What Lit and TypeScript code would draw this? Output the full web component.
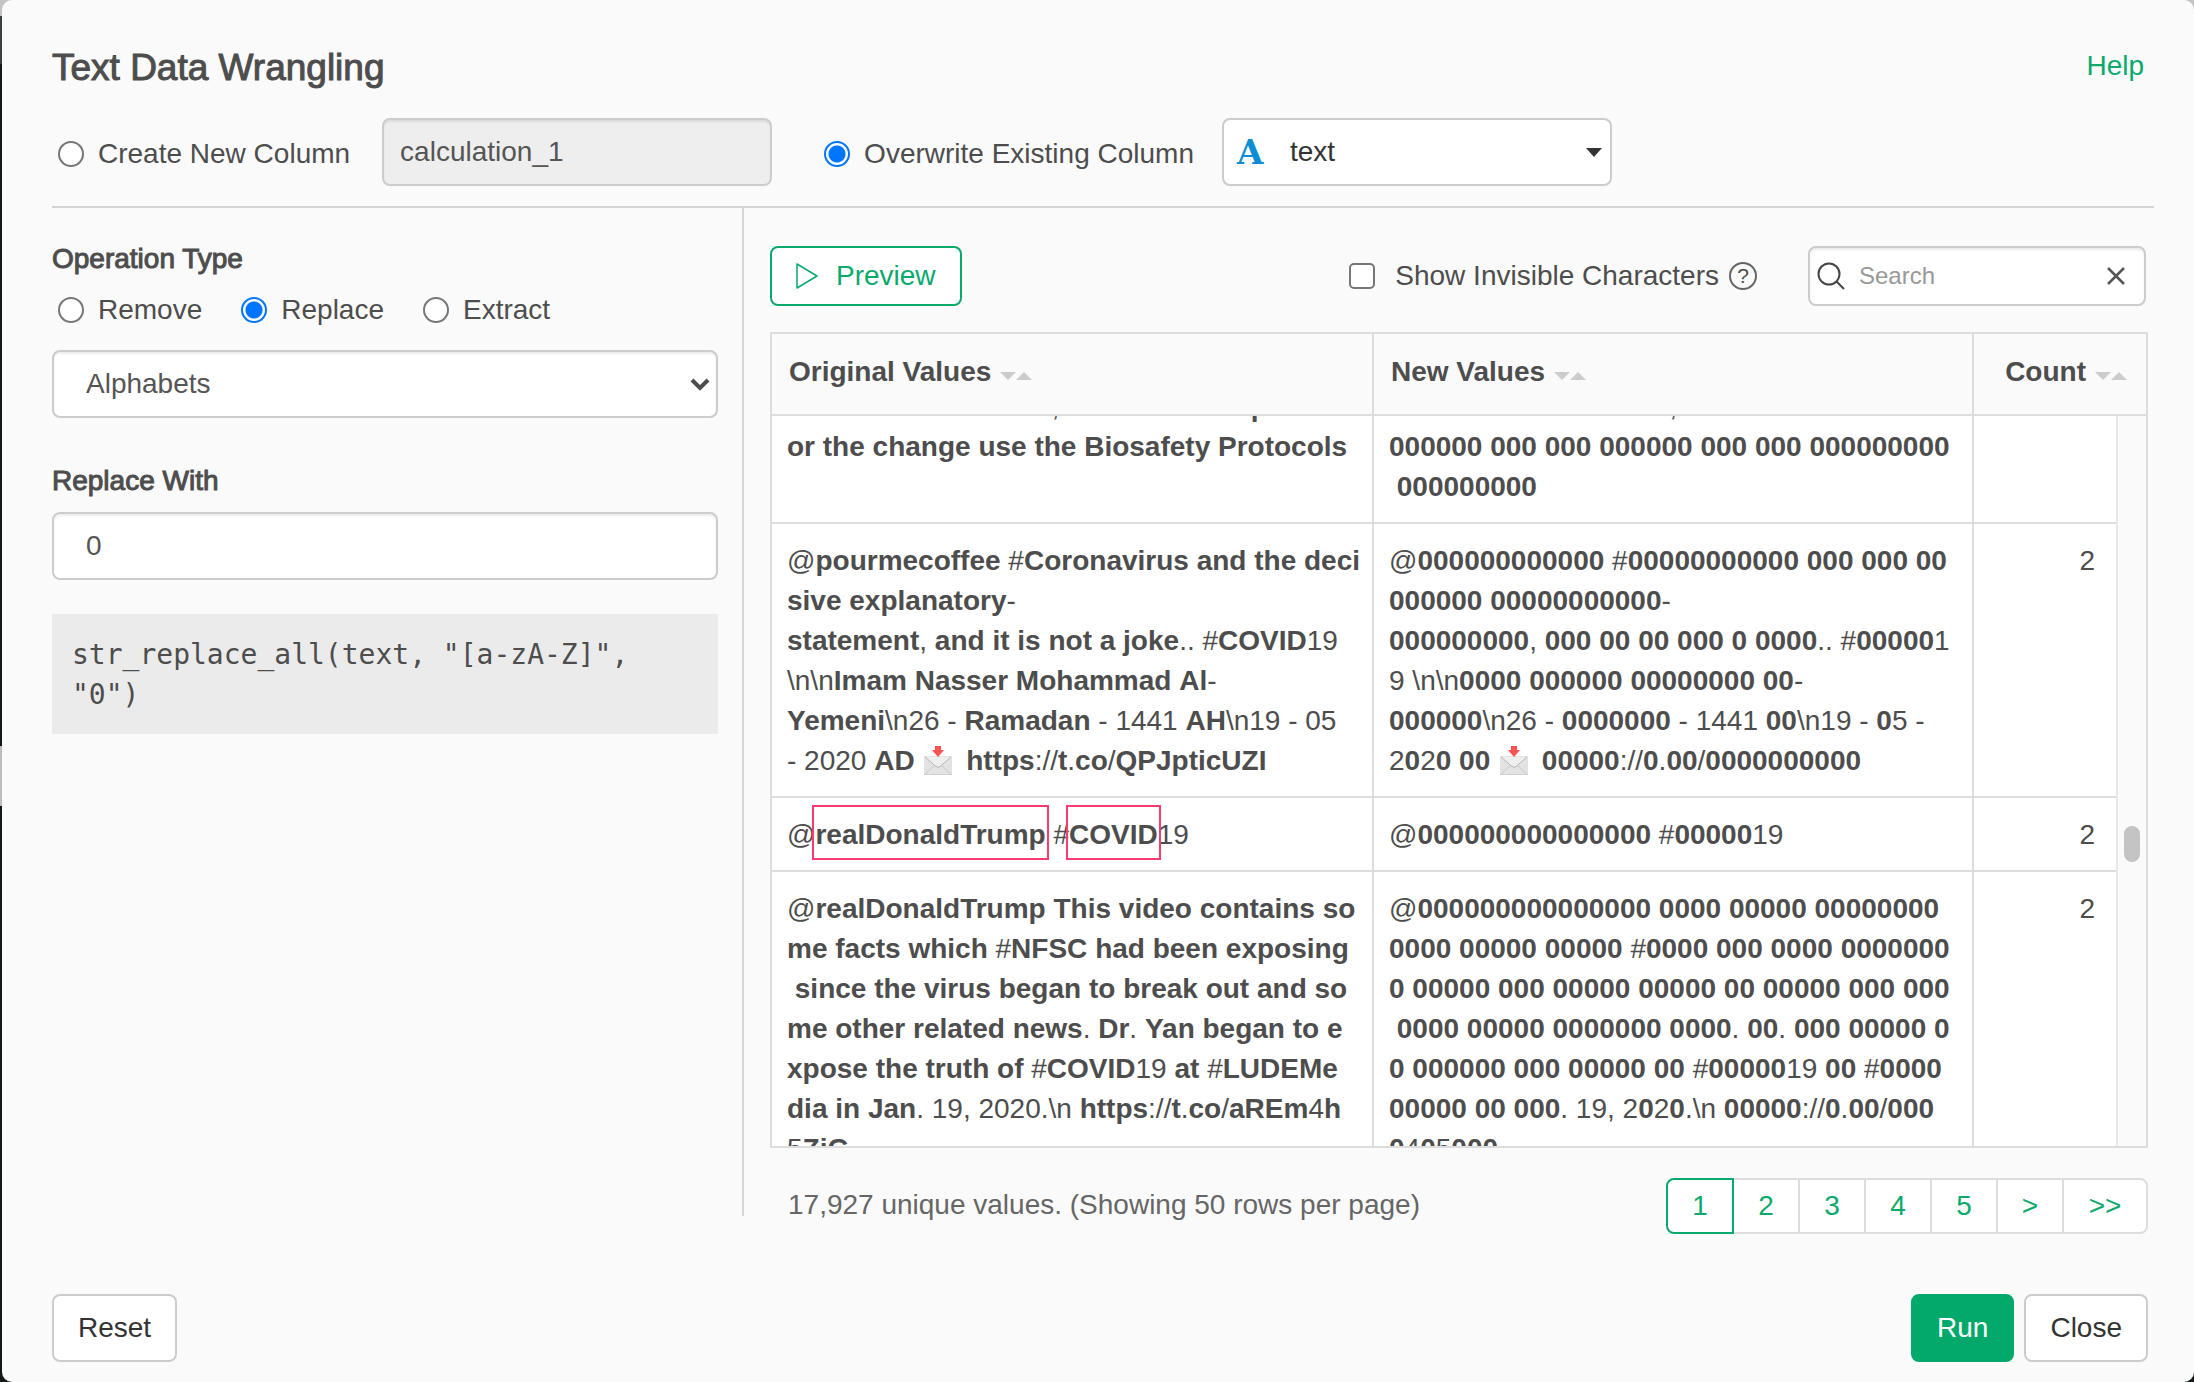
import { LitElement, html, css } from "lit";
import { customElement, property, query, state } from "lit/decorators.js";
import { classMap } from "lit/directives/class-map.js";

interface ValueRow {
  original: string[];
  replaced: string[];
  count: string;
  marked?: boolean;
}

const ROWS: ValueRow[] = [
  {
    original: ["who will lead us out, or is to be responsible f", "or the change use the Biosafety Protocols"],
    replaced: [
      "000 0000 0000 00 000, 00 00 00 00 00000",
      "000000 000 000 000000 000 000 000000000",
      " 000000000",
    ],
    count: "",
  },
  {
    original: [
      "@pourmecoffee #Coronavirus and the deci",
      "sive explanatory-",
      "statement, and it is not a joke.. #COVID19",
      "\\n\\nImam Nasser Mohammad Al-",
      "Yemeni\\n26 - Ramadan - 1441 AH\\n19 - 05",
      "- 2020 AD 📩 https://t.co/QPJpticUZI",
    ],
    replaced: [
      "@000000000000 #00000000000 000 000 00",
      "000000 00000000000-",
      "000000000, 000 00 00 000 0 0000.. #000001",
      "9 \\n\\n0000 000000 00000000 00-",
      "000000\\n26 - 0000000 - 1441 00\\n19 - 05 -",
      "2020 00 📩 00000://0.00/0000000000",
    ],
    count: "2",
  },
  {
    original: ["@realDonaldTrump #COVID19"],
    replaced: ["@000000000000000 #0000019"],
    count: "2",
    marked: true,
  },
  {
    original: [
      "@realDonaldTrump This video contains so",
      "me facts which #NFSC had been exposing",
      " since the virus began to break out and so",
      "me other related news. Dr. Yan began to e",
      "xpose the truth of #COVID19 at #LUDEMe",
      "dia in Jan. 19, 2020.\\n https://t.co/aREm4h",
      "5ZjG",
    ],
    replaced: [
      "@000000000000000 0000 00000 00000000",
      "0000 00000 00000 #0000 000 0000 0000000",
      "0 00000 000 00000 00000 00 00000 000 000",
      " 0000 00000 0000000 0000. 00. 000 00000 0",
      "0 000000 000 00000 00 #0000019 00 #0000",
      "00000 00 000. 19, 2020.\\n 00000://0.00/000",
      "0405000",
    ],
    count: "2",
  },
];

@customElement("matched-text")
export class MatchedText extends LitElement {
  static styles = css`
    :host { display: block; white-space: pre; }
    .hit { font-weight: bold; }
    .boxed { position: relative; }
    .boxed::after {
      content: "";
      position: absolute;
      inset: -14px -3px -10px;
      border: 2px solid #fb3a71;
    }
    .mail { width: 28px; height: 30px; margin: 0 6px 0 2px; vertical-align: -6px; }
  `;

  @property({ attribute: false }) lines: string[] = [];
  @property({ type: Boolean }) digits = false;
  @property({ type: Boolean }) boxed = false;

  private mail() {
    return html`<svg class="mail" viewBox="0 0 28 30" role="img" aria-label="Incoming envelope">
      <rect x="0" y="10" width="28" height="19" rx="1" fill="#e3e3e3" />
      <path d="M0 28.500h28" stroke="#cfcfcf" />
      <path d="M1 28l10-9M27 28l-10-9" stroke="#cbcbcb" fill="none" />
      <path d="M1 11l11 9.500q2 1.500 4 0l11-9.500" stroke="#b5b5b5" fill="#efefef" />
      <path d="M11 0h6v4h3l-6 7-6-7h3z" fill="#fb5450" />
    </svg>`;
  }

  private pieces(line: string) {
    const hit = this.digits ? /^0+$/ : /^[a-zA-Z]+$/;
    const split = this.digits ? /(\\n|📩|0+)/u : /(\\n|📩|[a-zA-Z]+)/u;
    return line
      .split(split)
      .filter((p) => p !== "")
      .map((p) => {
        if (p === "📩") return this.mail();
        if (hit.test(p)) return html`<span class=${classMap({ hit: true, boxed: this.boxed })}>${p}</span>`;
        return p;
      });
  }

  render() {
    return this.lines.map((line, i) => html`${i ? html`<br />` : ""}${this.pieces(line)}`);
  }
}

@customElement("app-root")
export class AppRoot extends LitElement {
  static styles = css`
    :host {
      display: block;
      min-height: 100vh;
      box-sizing: border-box;
      padding-left: 2px;
      background: linear-gradient(
        #c4c4c4 16px,
        #3a4042 16px 64px,
        #14191a 64px 746px,
        #bdbdbd 746px 806px,
        #14191a 806px
      );
      color: #4d4d4d;
      font: 28px/40px "Liberation Sans", Arial, sans-serif;
    }
    *, *::before, *::after { box-sizing: border-box; }
    button, input, select { font: inherit; color: inherit; margin: 0; }
    button { cursor: pointer; }
    .dialog {
      min-height: 100vh;
      display: flex;
      flex-direction: column;
      padding: 46px 40px 20px 50px;
      background: #fafafa;
      border-radius: 10px;
    }
    .head { display: flex; justify-content: space-between; align-items: flex-start; padding-right: 10px; }
    .title { margin: 0; font-size: 37px; line-height: 44px; font-weight: normal; -webkit-text-stroke: 1px #4d4d4d; }
    .help { color: #0aa96c; text-decoration: none; }
    .target { display: flex; align-items: center; padding: 28px 0 20px; }
    .choice { display: inline-flex; align-items: center; gap: 14px; }
    .target .choice { padding-top: 4px; }
    .radio {
      appearance: none;
      width: 26px;
      height: 26px;
      margin: 0 0 0 6px;
      border: 2px solid #767676;
      border-radius: 50%;
      background: #fff;
    }
    .radio:checked { border-color: #0075ff; background: radial-gradient(circle, #0075ff 8px, #fff 9px); }
    .field {
      height: 68px;
      border: 2px solid #ccc;
      border-radius: 8px;
      background: #fff;
      box-shadow: inset 0 2px 2px rgba(0, 0, 0, 0.075);
      color: #555;
    }
    .name { width: 390px; margin: 0 46px 0 32px; padding: 0 16px; background: #eee; }
    .column {
      position: relative;
      width: 390px;
      margin-left: 28px;
      display: flex;
      align-items: center;
      box-shadow: none;
    }
    .letter {
      position: absolute;
      left: 13px;
      color: #0e8ed2;
      font: bold 34px/40px "DejaVu Serif", serif;
      pointer-events: none;
    }
    .drop { appearance: none; width: 100%; height: 100%; border: 0; outline: 0; background: none; }
    .column .drop { padding-left: 66px; color: #333; }
    .arrow { position: absolute; pointer-events: none; }
    .column .arrow { right: 8px; width: 16px; height: 9px; }
    .kind .arrow { right: 6px; width: 20px; height: 13px; }
    .work { display: flex; flex: 1; border-top: 2px solid #d4d4d4; }
    .side { width: 692px; margin-bottom: 18px; padding: 31px 24px 0 0; border-right: 2px solid #d4d4d4; }
    .caption { display: block; -webkit-text-stroke: 1px #4d4d4d; }
    .group { border: 0; margin: 0; padding: 0; }
    .group legend { padding: 0; }
    .choices { display: flex; gap: 33px; padding: 11px 0 20px; }
    .kind { position: relative; display: flex; align-items: center; margin-bottom: 43px; }
    .kind .drop { padding-left: 32px; }
    .with { display: block; width: 100%; margin: 11px 0 34px; padding: 0 32px; }
    .code {
      margin: 0;
      padding: 21px 20px 19px;
      background: #ebebeb;
      font: 28px/40px "DejaVu Sans Mono", monospace;
      white-space: pre-wrap;
    }
    .main { flex: 1; min-width: 0; padding: 38px 6px 0 26px; }
    .bar { display: flex; align-items: center; margin-bottom: 26px; padding-right: 2px; }
    .btn {
      height: 68px;
      padding: 0 24px;
      border: 2px solid #ccc;
      border-radius: 8px;
      background: #fff;
      color: #333;
    }
    .preview {
      display: flex;
      align-items: center;
      gap: 18px;
      height: 60px;
      border-color: #0aa96c;
      color: #0aa96c;
      margin-right: auto;
    }
    .play { width: 22px; height: 26px; }
    .check {
      appearance: none;
      width: 26px;
      height: 26px;
      margin: 0 6px 0 0;
      border: 2px solid #767676;
      border-radius: 5px;
      background: #fff;
    }
    .about {
      width: 28px;
      height: 28px;
      margin: 0 51px 0 10px;
      border: 2px solid #666;
      border-radius: 50%;
      font-size: 21px;
      line-height: 24px;
      text-align: center;
    }
    .search { display: flex; align-items: center; width: 338px; height: 60px; padding: 0 18px 0 7px; }
    .glass { width: 28px; height: 28px; flex: none; }
    .query { flex: 1; min-width: 0; border: 0; outline: 0; padding: 0 0 0 14px; background: none; font-size: 24px; }
    .query::placeholder { color: #999; opacity: 1; }
    .clear { display: flex; border: 0; padding: 0; background: none; }
    .grid { border: 2px solid #ddd; }
    .values { width: 100%; border-collapse: separate; border-spacing: 0; table-layout: fixed; }
    .c1 { width: 602px; }
    .c3 { width: 172px; }
    .heading { height: 82px; padding: 0 17px 4px; text-align: left; border-right: 2px solid #ddd; border-bottom: 2px solid #ddd; }
    .heading:last-child { border-right: 0; text-align: right; padding-right: 19px; }
    .order { display: inline-flex; margin-left: 9px; border: 0; padding: 0 0 2px; background: none; }
    .pane { display: flex; height: 730px; background: #fff; }
    .scroll { flex: 1; min-width: 0; overflow-y: auto; scrollbar-width: none; }
    .scroll .c3 { width: 142px; }
    .cell { padding: 17px 15px 15px; vertical-align: top; border-right: 2px solid #ddd; border-bottom: 2px solid #ddd; }
    .cell:last-child { border-right: 0; text-align: right; padding-right: 21px; }
    .track { width: 30px; padding-top: 410px; border-left: 2px solid #e8e8e8; background: #fafafa; }
    .thumb { width: 16px; height: 36px; margin: 0 auto; border-radius: 8px; background: #c4c4c4; }
    .under { display: flex; justify-content: space-between; padding: 30px 0 0 18px; color: #666; }
    .summary { padding-top: 7px; }
    .pages { display: flex; }
    .page { height: 56px; padding: 0; width: 66px; border: 2px solid #ddd; border-left: 0; background: #fff; color: #0aa96c; }
    .page:first-child { width: 68px; border: 2px solid #0aa96c; border-radius: 8px 0 0 8px; }
    .page:last-child { width: 84px; border-radius: 0 8px 8px 0; }
    .foot { display: flex; gap: 10px; padding: 60px 6px 0 0; }
    .run { margin-left: auto; border-color: #02a96b; background: #02a96b; color: #fff; }
  `;

  @state() private operation = "Replace";
  @query(".scroll") private pane!: HTMLElement;

  firstUpdated() {
    this.updateComplete.then(() => requestAnimationFrame(() => (this.pane.scrollTop = 46)));
  }

  private sorter(label: string) {
    return html`<button class="order" aria-label="Sort by ${label}">
      <svg width="32" height="10" viewBox="0 0 32 10" fill="#ccc" aria-hidden="true">
        <path d="M0 1h16l-8 8zM16 9h16l-8-8z" />
      </svg>
    </button>`;
  }

  render() {
    return html`
      <div class="dialog" role="dialog" aria-labelledby="title">
        <header class="head">
          <h1 class="title" id="title">Text Data Wrangling</h1>
          <a class="help" href="#help">Help</a>
        </header>

        <div class="target">
          <label class="choice"><input class="radio" type="radio" name="target" />Create New Column</label>
          <input class="field name" type="text" value="calculation_1" aria-label="New column name" disabled />
          <label class="choice"><input class="radio" type="radio" name="target" checked />Overwrite Existing Column</label>
          <div class="field column">
            <span class="letter" aria-hidden="true">A</span>
            <select class="drop" aria-label="Existing column"><option>text</option></select>
            <svg class="arrow" viewBox="0 0 16 9" fill="#333" aria-hidden="true"><path d="M0 0h16l-8 9z" /></svg>
          </div>
        </div>

        <div class="work">
          <section class="side">
            <fieldset class="group">
              <legend class="caption">Operation Type</legend>
              <div class="choices">
                ${["Remove", "Replace", "Extract"].map(
                  (name) => html`<label class="choice"
                    ><input
                      class="radio"
                      type="radio"
                      name="operation"
                      .checked=${this.operation === name}
                      @change=${() => (this.operation = name)}
                    />${name}</label
                  >`,
                )}
              </div>
            </fieldset>
            <div class="field kind">
              <select class="drop" aria-label="Characters to replace"><option>Alphabets</option></select>
              <svg class="arrow" viewBox="0 0 20 13" fill="none" stroke="#4d4d4d" stroke-width="4" aria-hidden="true">
                <path d="M2 2l8 8 8-8" />
              </svg>
            </div>
            <label class="caption" for="with">Replace With</label>
            <input class="field with" id="with" type="text" value="0" />
            <pre class="code">str_replace_all(text, "[a-zA-Z]", "0")</pre>
          </section>

          <section class="main">
            <div class="bar">
              <button class="btn preview">
                <svg class="play" viewBox="0 0 22 26" fill="none" stroke="currentColor" stroke-width="1.500" stroke-linejoin="round" aria-hidden="true">
                  <path d="M1 1v24l20-12z" />
                </svg>
                Preview
              </button>
              <label class="choice"><input class="check" type="checkbox" />Show Invisible Characters</label>
              <span class="about" aria-hidden="true">?</span>
              <div class="field search">
                <svg class="glass" viewBox="0 0 28 28" fill="none" stroke="#444" stroke-width="2" aria-hidden="true">
                  <circle cx="12" cy="12" r="10.500" />
                  <path d="M19.500 19.500L27 27" />
                </svg>
                <input class="query" type="text" placeholder="Search" aria-label="Search values" />
                <button class="clear" aria-label="Clear search">
                  <svg width="20" height="20" viewBox="0 0 20 20" stroke="#555" stroke-width="2.500" aria-hidden="true">
                    <path d="M2 2l16 16M18 2L2 18" />
                  </svg>
                </button>
              </div>
            </div>

            <div class="grid">
              <table class="values">
                <colgroup><col class="c1" /><col /><col class="c3" /></colgroup>
                <thead>
                  <tr>
                    ${["Original Values", "New Values", "Count"].map(
                      (name) => html`<th class="heading" scope="col">${name}${this.sorter(name)}</th>`,
                    )}
                  </tr>
                </thead>
              </table>
              <div class="pane">
                <div class="scroll">
                  <table class="values" aria-label="Values">
                    <colgroup><col class="c1" /><col /><col class="c3" /></colgroup>
                    <tbody>
                      ${ROWS.map(
                        (row) => html`<tr>
                          <td class="cell"><matched-text .lines=${row.original} ?boxed=${row.marked}></matched-text></td>
                          <td class="cell"><matched-text .lines=${row.replaced} digits></matched-text></td>
                          <td class="cell">${row.count}</td>
                        </tr>`,
                      )}
                    </tbody>
                  </table>
                </div>
                <div class="track"><div class="thumb"></div></div>
              </div>
            </div>

            <div class="under">
              <span class="summary">17,927 unique values. (Showing 50 rows per page)</span>
              <nav class="pages" aria-label="Pages">
                ${["1", "2", "3", "4", "5", ">", ">>"].map((p) => html`<button class="page">${p}</button>`)}
              </nav>
            </div>
          </section>
        </div>

        <footer class="foot">
          <button class="btn">Reset</button>
          <button class="btn run">Run</button>
          <button class="btn">Close</button>
        </footer>
      </div>
    `;
  }
}
